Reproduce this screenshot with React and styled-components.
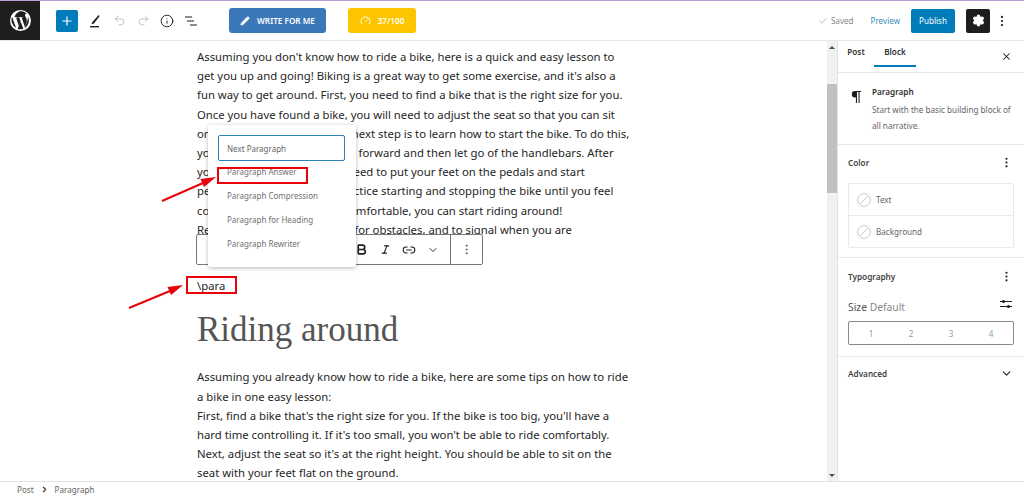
import React from 'react';
import styled, { createGlobalStyle } from 'styled-components';
import { Plus, Undo2, Redo2, Info, Pencil, Gauge, Check, Settings, MoreVertical, X, ChevronDown, ChevronRight, Link2, Bold, Italic } from 'lucide-react';

const Global = createGlobalStyle`
  html, body { margin: 0; padding: 0; height: 100%; overflow: hidden; background: #fff; }
  body { font-family: "Noto Sans", "Open Sans", sans-serif; color: #1e1e1e; }
  #root { height: 497px; }
`;
const Page = styled.div`width: 1024px; height: 497px; display: flex; flex-direction: column; overflow: hidden;`;
const TopBar = styled.header`
  height: 41px; box-sizing: border-box; flex: none; display: flex; align-items: center; border-top: 1px solid #b99fd6; border-bottom: 1px solid #e8e8e8; background: #fff;
`;
const Logo = styled.div`width: 40px; height: 39px; background: #1e1e1e; display: flex; align-items: center; justify-content: center;`;
const InsertBtn = styled.button`
  width: 22px; height: 22px; margin-left: 16px; padding: 0; border: 0; border-radius: 2px; background: #007cba; color: #fff; display: flex; align-items: center; justify-content: center;
`;
const Tool = styled.span`
  width: 24px; display: flex; justify-content: center; color: ${p => p.$off ? '#b5b5b5' : '#1e1e1e'};
`;
const Tools = styled.div`display: flex; align-items: center; margin-left: 5px;`;
const WriteBtn = styled.button`
  margin-left: 26px; width: 97px; height: 25px; padding: 0; border: 0; border-radius: 3px; background: #3b78b9; color: #fff; font: 600 8.2px "Noto Sans", sans-serif; display: flex; align-items: center; justify-content: center; gap: 7px;
`;
const ScoreBtn = styled.button`
  margin-left: 22px; width: 68px; height: 25px; padding: 0; border: 0; border-radius: 3px; background: #fdc500; color: #fff; font: 600 8.2px "Noto Sans", sans-serif; display: flex; align-items: center; justify-content: center; gap: 7px;
`;
const Right = styled.div`margin-left: auto; margin-right: 10px; display: flex; align-items: center;`;
const Saved = styled.span`font-size: 8.1px; color: #8a8a8a; display: flex; align-items: center; gap: 3px;`;
const Preview = styled.span`font-size: 8.1px; color: #3c8fbd; margin-left: 17px;`;
const Publish = styled.button`
  margin-left: 11px; width: 44px; height: 24px; padding: 0; border: 0; border-radius: 2px; background: #007cba; color: #fff; font: 400 8.1px "Noto Sans", sans-serif;
`;
const Gear = styled.button`
  margin-left: 11px; width: 24px; height: 24px; padding: 0; border: 0; border-radius: 2px; background: #1e1e1e; color: #fff; display: flex; align-items: center; justify-content: center;
`;
const More = styled.span`width: 24px; display: flex; justify-content: center; color: #1e1e1e;`;

const Main = styled.div`flex: 1; min-height: 0; display: flex;`;
const EditorArea = styled.main`flex: 1; min-width: 0; position: relative; overflow: hidden;`;
const Content = styled.div`width: 440px; margin-left: 197px; padding-top: 6px;`;
const Para = styled.p`margin: 0; font-size: 11.32px; line-height: 19.2px; color: #262626; white-space: nowrap;`;
const Slash = styled.p`margin: 37px 0 0; font-size: 11.3px; line-height: 19px; color: #262626;`;
const Heading = styled.h2`margin: 11px 0 13.4px; font: 400 35px/48px "Liberation Serif", serif; color: #555;`;

const Popup = styled.div`
  position: absolute; left: 208px; top: 84px; width: 148px; height: 142px; background: #fff; border-radius: 2px; box-shadow: 0 1px 4px rgba(0,0,0,.28);
`;
const Field = styled.div`
  box-sizing: border-box; margin: 10px 0 0 10px; width: 127px; height: 26px; border: 1.5px solid #2a84b8; border-radius: 2px; font-size: 8px; color: #666; padding-left: 8px; display: flex; align-items: center;
`;
const Option = styled.div`font-size: 8px; color: #707070; padding-left: 19px; height: 24px; line-height: 24px;`;
const Options = styled.div`margin-top: -1px;`;
const FormatBar = styled.div`
  position: absolute; left: 196px; top: 193px; width: 287px; height: 31px; box-sizing: border-box; border: 1px solid #777; border-radius: 2px; background: #fff; display: flex; align-items: center; justify-content: flex-end;
`;
const FmtIcon = styled.span`width: 24px; display: flex; justify-content: center; color: #1e1e1e;`;
const FmtSep = styled.span`width: 1px; height: 29px; background: #777; margin-left: 5px;`;
const FmtLast = styled.span`width: 31px; display: flex; justify-content: center; color: #555;`;
const RedBox = styled.div`position: absolute; border: 2px solid #e8000b; box-sizing: border-box; left: ${p => p.$l}px; top: ${p => p.$t}px; width: ${p => p.$w}px; height: ${p => p.$h}px;`;
const Arrows = styled.svg`position: absolute; left: 0; top: 0; pointer-events: none;`;

const Scroll = styled.div`width: 10px; flex: none; background: #f1f1f1; display: flex; flex-direction: column; align-items: center;`;
const ArrowCap = styled.div`height: 12px; flex: none; display: flex; align-items: center; justify-content: center; &::after { content: ""; border-left: 3px solid transparent; border-right: 3px solid transparent; ${p => p.$down ? 'border-top: 3px solid #505050;' : 'border-bottom: 3px solid #505050;'} }`;
const Thumb = styled.div`width: 100%; height: 109px; margin-top: 31px; background: #c1c1c1;`;
const Spacer = styled.div`flex: 1;`;

const Side = styled.aside`width: 187px; box-sizing: border-box; flex: none; border-left: 1px solid #e4e4e4; display: flex; flex-direction: column; background: #fff;`;
const Tabs = styled.div`height: 32px; box-sizing: border-box; display: flex; align-items: flex-start; border-bottom: 1px solid #e8e8e8;`;
const Tab = styled.div`font-size: 8.2px; font-weight: 600; color: #333; width: ${p => p.$w}px; height: 26px; margin-left: ${p => p.$m}px; text-align: center; padding-top: 5px; box-sizing: border-box; border-bottom: 2px solid ${p => p.$on ? '#007cba' : 'transparent'};`;
const CloseBtn = styled.span`margin-left: auto; margin-right: 12px; margin-top: 10px; color: #1e1e1e; display: flex;`;
const Section = styled.section`border-bottom: 1px solid #e8e8e8; padding: 0 10px; box-sizing: border-box;`;
const BlockCard = styled(Section)`height: 72px; display: flex; padding-top: 12px;`;
const PilIcon = styled.span`width: 21px; flex: none; margin-left: 3px; padding-top: 1px;`;
const BlockTitle = styled.div`font-size: 8.2px; font-weight: 600; color: #333; line-height: 14px; margin-bottom: 3px;`;
const BlockDesc = styled.div`font-size: 8.15px; color: #666; line-height: 15.5px; width: 146px;`;
const SecHead = styled.div`display: flex; justify-content: space-between; align-items: center; font-size: 8.2px; font-weight: 600; color: #444; height: 14px; & > span:last-child { margin-right: -4px; }`;
const ColorSec = styled(Section)`height: 113px; padding-top: 10px;`;
const ColorBox = styled.div`margin-top: 14px; border: 1px solid #eaeaea; border-radius: 2px;`;
const ColorRow = styled.div`height: 31px; display: flex; align-items: center; padding-left: 8px; gap: 5px; font-size: 8.1px; color: #666; & + & { border-top: 1px solid #eaeaea; }`;
const Swatch = styled.svg`width: 14px; height: 14px; flex: none;`;
const TypeSec = styled(Section)`height: 99px; padding-top: 11px;`;
const SizeRow = styled.div`margin-top: 18px; display: flex; justify-content: space-between; align-items: center; height: 12px;`;
const SizeLabel = styled.span`font-size: 10.3px; color: #555; & em { font-style: normal; color: #888; }`;
const Sliders = styled.svg`margin: -6px 2px 0 0; flex: none;`;
const Segs = styled.div`margin-top: 8px; height: 24px; box-sizing: border-box; border: 1px solid #8a8a8a; border-radius: 2px; display: grid; grid-template-columns: repeat(4, 40px); padding-left: 2px; align-items: center; font-size: 8.1px; color: #999; text-align: center;`;
const AdvSec = styled.div`padding: 9px 10px 0;`;

const Foot = styled.footer`height: 15px; flex: none; border-top: 1px solid #e4e4e4; display: flex; align-items: center; padding-left: 17px; font-size: 8.1px; color: #666; background: #fff; gap: 6px;`;

const lines1 = ["Assuming you don't know how to ride a bike, here is a quick and easy lesson to","get you up and going! Biking is a great way to get some exercise, and it's also a","fun way to get around. First, you need to find a bike that is the right size for you.","Once you have found a bike, you will need to adjust the seat so that you can sit","on the bike comfortably. The next step is to learn how to start the bike. To do this,","you will need to push the bike forward and then let go of the handlebars. After","you have done this, you will need to put your feet on the pedals and start","pedaling. You will need to practice starting and stopping the bike until you feel","comfortable. Once you feel comfortable, you can start riding around!","Remember to keep a lookout for obstacles, and to signal when you are"];
const lines2 = ["Assuming you already know how to ride a bike, here are some tips on how to ride","a bike in one easy lesson:","First, find a bike that's the right size for you. If the bike is too big, you'll have a","hard time controlling it. If it's too small, you won't be able to ride comfortably.","Next, adjust the seat so it's at the right height. You should be able to sit on the","seat with your feet flat on the ground."];

const NoColor = () => (
  <Swatch viewBox="0 0 14 14"><circle cx="7" cy="7" r="6.4" fill="none" stroke="#ccc" /><path d="M3 11 11 3" stroke="#ccc" /></Swatch>
);
const WpLogo = () => (
  <svg width="21" height="21" viewBox="0 0 24 24" fill="#fff"><path d="M12 0a12 12 0 1 0 0 24 12 12 0 0 0 0-24Zm0 1.2a10.8 10.8 0 0 1 7.3 2.85c-.1 0-.2-.02-.3-.02-1.1 0-1.9 1-1.9 2 0 .9.5 1.7 1.1 2.6.4.8 1 1.8 1 3.3 0 1-.4 2.2-.9 3.9l-1.2 4L13.5 9c.5 0 1-.1 1-.1.4-.05.4-.7-.1-.66 0 0-1.4.1-2.3.1-.8 0-2.2-.1-2.2-.1-.5-.04-.5.7-.1.66 0 0 .5.1.9.1l1.3 3.6-1.9 5.6L7 8.9c.5 0 1-.1 1-.1.4-.05.4-.7-.1-.66 0 0-1.4.1-2.3.1h-.6A10.8 10.8 0 0 1 12 1.2ZM2.3 7.6 7 20.6A10.8 10.8 0 0 1 2.3 7.6Zm9.9 5.4 3 8.3.07.13a10.8 10.8 0 0 1-6.6.17L12.2 13Zm8.6-4.9A10.8 10.8 0 0 1 16.8 21l3-8.7c.56-1.4.75-2.5.75-3.5 0-.3-.02-.5-.05-.7Z"/></svg>
);
const ListIcon = () => (
  <svg width="12" height="10" viewBox="0 0 12 10" fill="none" stroke="#1e1e1e" strokeWidth="1.2"><path d="M0 1h7M2 5h7M5 9h7" /></svg>
);
const Brush = () => (
  <svg width="14" height="16" viewBox="0 0 14 16" fill="#1e1e1e"><path d="M4 9.5 10.2 2.5c.6-.6 1.6.3 1.1 1L6 10.5l-2.5.8.5-1.8Z"/><rect x="2" y="13" width="9" height="1.4"/></svg>
);
const PilcrowSolid = () => (
  <svg width="10" height="12" viewBox="0 0 10 12" fill="#1e1e1e"><path d="M4 0h6v1.1H8.6V12H7.5V1.1H6V12H4.9V6.4H4A3.2 3.2 0 0 1 4 0Z"/></svg>
);
const SlidersIcon = () => (
  <Sliders width="12" height="10" viewBox="0 0 12 10" fill="#1e1e1e"><rect y="2" width="12" height="1"/><rect y="7" width="12" height="1"/><circle cx="3.5" cy="2.5" r="1.6"/><circle cx="8.5" cy="7.5" r="1.6"/></Sliders>
);

export default function App() {
  return (
    <Page>
      <Global />
      <TopBar>
        <Logo><WpLogo /></Logo>
        <InsertBtn><Plus size={14} strokeWidth={2} /></InsertBtn>
        <Tools>
          <Tool><Brush /></Tool>
          <Tool $off><Undo2 size={13} strokeWidth={1.5} /></Tool>
          <Tool $off><Redo2 size={13} strokeWidth={1.5} /></Tool>
          <Tool><Info size={14} strokeWidth={1.6} /></Tool>
          <Tool><ListIcon /></Tool>
        </Tools>
        <WriteBtn><Pencil size={10} fill="#fff" strokeWidth={1.5} />WRITE FOR ME</WriteBtn>
        <ScoreBtn><Gauge size={11} strokeWidth={2} />37/100</ScoreBtn>
        <Right>
          <Saved><Check size={10} strokeWidth={1.4} />Saved</Saved>
          <Preview>Preview</Preview>
          <Publish>Publish</Publish>
          <Gear><Settings size={13} fill="#fff" stroke="#fff" strokeWidth={2} /></Gear>
          <More><MoreVertical size={14} strokeWidth={1.8} /></More>
        </Right>
      </TopBar>
      <Main>
        <EditorArea>
          <Content>
            {lines1.map(l => <Para key={l}>{l}</Para>)}
            <Slash>\para</Slash>
            <Heading>Riding around</Heading>
            {lines2.map(l => <Para key={l}>{l}</Para>)}
          </Content>
          <FormatBar>
            <FmtIcon><Bold size={13} strokeWidth={3} /></FmtIcon>
            <FmtIcon><Italic size={11} strokeWidth={2.4} /></FmtIcon>
            <FmtIcon><Link2 size={14} strokeWidth={1.8} /></FmtIcon>
            <FmtIcon><ChevronDown size={12} strokeWidth={1.8} /></FmtIcon>
            <FmtSep />
            <FmtLast><MoreVertical size={13} strokeWidth={1.8} /></FmtLast>
          </FormatBar>
          <Popup>
            <Field>Next Paragraph</Field>
            <Options>
              <Option>Paragraph Answer</Option>
              <Option>Paragraph Compression</Option>
              <Option>Paragraph for Heading</Option>
              <Option>Paragraph Rewriter</Option>
            </Options>
          </Popup>
          <RedBox $l={217} $t={126} $w={91} $h={17} />
          <RedBox $l={186} $t={235} $w={51} $h={18} />
          <Arrows width="400" height="300" viewBox="0 0 400 300">
            <path d="M162 160 L203 142" stroke="#e8000b" strokeWidth="2" />
            <path d="M216 136 L200.5 137.9 L204.1 146.1 Z" fill="#e8000b" />
            <path d="M129 267 L170 250" stroke="#e8000b" strokeWidth="2" />
            <path d="M183 244 L167.5 245.9 L171.1 254.1 Z" fill="#e8000b" />
          </Arrows>
        </EditorArea>
        <Scroll>
          <ArrowCap />
          <Thumb />
          <Spacer />
          <ArrowCap $down />
        </Scroll>
        <Side>
          <Tabs>
            <Tab $w={30} $m={3}>Post</Tab>
            <Tab $w={42} $m={3} $on>Block</Tab>
            <CloseBtn><X size={11} strokeWidth={2.2} /></CloseBtn>
          </Tabs>
          <BlockCard>
            <PilIcon><PilcrowSolid /></PilIcon>
            <div>
              <BlockTitle>Paragraph</BlockTitle>
              <BlockDesc>Start with the basic building block of all narrative.</BlockDesc>
            </div>
          </BlockCard>
          <ColorSec>
            <SecHead><span>Color</span><More><MoreVertical size={13} /></More></SecHead>
            <ColorBox>
              <ColorRow><NoColor />Text</ColorRow>
              <ColorRow><NoColor />Background</ColorRow>
            </ColorBox>
          </ColorSec>
          <TypeSec>
            <SecHead><span>Typography</span><More><MoreVertical size={13} /></More></SecHead>
            <SizeRow>
              <SizeLabel>Size <em>Default</em></SizeLabel>
              <SlidersIcon />
            </SizeRow>
            <Segs><span>1</span><span>2</span><span>3</span><span>4</span></Segs>
          </TypeSec>
          <AdvSec>
            <SecHead><span>Advanced</span><More><ChevronDown size={13} /></More></SecHead>
          </AdvSec>
        </Side>
      </Main>
      <Foot>Post<ChevronRight size={9} strokeWidth={3} color="#333" />Paragraph</Foot>
    </Page>
  );
}
